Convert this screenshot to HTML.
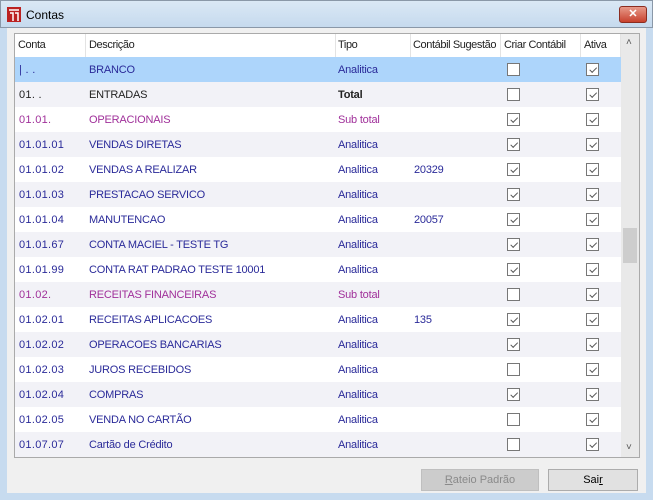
<!DOCTYPE html>
<html><head><meta charset="utf-8"><style>
*{margin:0;padding:0;box-sizing:border-box}
body{width:653px;height:500px;overflow:hidden;background:#c7dbef;font-family:"Liberation Sans",sans-serif;font-size:11px;position:relative}
.title{position:absolute;left:0;top:0;width:653px;height:28px;background:linear-gradient(#dae8f5,#c6daee);border:1px solid #8a98a8}
.title .t{position:absolute;left:25px;top:7px;font-size:12px;color:#000}
.close{position:absolute;left:618px;top:5px;width:28px;height:17px;background:linear-gradient(#e79a8a,#c8422e);border:1px solid #8b2d21;border-radius:3px;color:#fff;font-weight:bold;text-align:center;font-size:11px;line-height:15px}
.client{position:absolute;left:7px;top:28px;width:639px;height:465px;background:#f0f0f0}
.grid{position:absolute;left:14px;top:33px;width:626px;height:425px;background:#fff;border:1px solid #aaa;overflow:hidden}
.hdr{position:absolute;left:0;top:0;height:23px;width:606px;background:#fff;letter-spacing:-0.4px}
.hdr div{position:absolute;top:5px;color:#222;white-space:nowrap}
.vl{position:absolute;top:0;height:23px;width:1px;background:#e3e3e3}
.row{position:absolute;left:0;width:606px;height:25px;letter-spacing:-0.2px}
.row div{position:absolute;top:7px;white-space:nowrap}
.g{background:#f2f2f7}
.sel{background:#add5fb}
.cb{position:absolute;width:13px;height:13px;border:1px solid #777;background:#fff;top:6px!important}
.cb.c::after{content:"";position:absolute;left:2px;top:1px;width:6px;height:3px;border-left:1.3px solid #555;border-bottom:1.3px solid #555;transform:rotate(-45deg) translate(-1px,2px)}
.nv{color:#2a2a99}.pu{color:#a0309a}.bk{color:#222}
.sb{position:absolute;left:606px;top:0;width:18px;height:423px;background:#e9e9e9}
.thumb{position:absolute;left:2px;top:194px;width:14px;height:35px;background:#cdcdcd}
.btn{position:absolute;top:469px;height:22px;border:1px solid #acacac;text-align:center;line-height:20px;font-size:11px}
</style></head><body>
<div class="title"><svg style="position:absolute;left:6px;top:6px" width="14" height="15"><rect x="0" y="0" width="14" height="15" fill="#b22"/><path d="M2 3h10M3 6h3v8M8 6h3v8" stroke="#fff" stroke-width="1.5" fill="none"/></svg><span class="t">Contas</span><div class="close">✕</div></div>
<div class="client"></div>
<div class="grid">
<div class="hdr">
<div style="left:3px">Conta</div><div style="left:74px">Descrição</div><div style="left:323px">Tipo</div><div style="left:398px">Contábil Sugestão</div><div style="left:489px">Criar Contábil</div><div style="left:569px">Ativa</div>
<span class="vl" style="left:70px"></span><span class="vl" style="left:320px"></span><span class="vl" style="left:395px"></span><span class="vl" style="left:485px"></span><span class="vl" style="left:565px"></span><span class="vl" style="left:605px"></span>
</div>
<div id="rows"></div>
<div class="sb"><div style="position:absolute;left:5px;top:3px;color:#555;font-size:10px">˄</div><div class="thumb"></div><div style="position:absolute;left:5px;top:408px;color:#555;font-size:10px">˅</div></div>
</div>
<div class="btn" style="left:421px;width:118px;background:#ccc;color:#8a8a8a;border-color:#bfbfbf"><u>R</u>ateio Padrão</div>
<div class="btn" style="left:548px;width:90px;background:#e1e1e1;color:#000">Sai<u>r</u></div>
<script>
var d=[["| . .","BRANCO","Analitica","",0,1,"nv"],["01. .","ENTRADAS","Total","",0,1,"bk"],["01.01.","OPERACIONAIS","Sub total","",1,1,"pu"],["01.01.01","VENDAS DIRETAS","Analitica","",1,1,"nv"],["01.01.02","VENDAS A REALIZAR","Analitica","20329",1,1,"nv"],["01.01.03","PRESTACAO SERVICO","Analitica","",1,1,"nv"],["01.01.04","MANUTENCAO","Analitica","20057",1,1,"nv"],["01.01.67","CONTA MACIEL - TESTE TG","Analitica","",1,1,"nv"],["01.01.99","CONTA RAT PADRAO TESTE 10001","Analitica","",1,1,"nv"],["01.02.","RECEITAS FINANCEIRAS","Sub total","",0,1,"pu"],["01.02.01","RECEITAS APLICACOES","Analitica","135",1,1,"nv"],["01.02.02","OPERACOES BANCARIAS","Analitica","",1,1,"nv"],["01.02.03","JUROS RECEBIDOS","Analitica","",0,1,"nv"],["01.02.04","COMPRAS","Analitica","",1,1,"nv"],["01.02.05","VENDA NO CARTÃO","Analitica","",0,1,"nv"],["01.07.07","Cartão de Crédito","Analitica","",0,1,"nv"]];
var h="";d.forEach(function(r,i){var c=i==0?"sel":(i%2?"g":"");var cc=i==0?"nv":r[6];var cc1=i==1?"bk":cc;
h+='<div class="row '+c+'" style="top:'+(23+i*25)+'px"><div class="'+cc1+'" style="left:4px;letter-spacing:0.3px">'+r[0]+'</div><div class="'+cc1+'" style="left:74px">'+r[1]+'</div><div class="'+cc1+'" style="left:323px'+(i==1?';font-weight:bold':'')+'">'+r[2]+'</div><div class="'+cc1+'" style="left:399px">'+r[3]+'</div><div class="cb'+(r[4]?' c':'')+'" style="left:492px"></div><div class="cb'+(r[5]?' c':'')+'" style="left:571px"></div></div>';});
document.getElementById("rows").innerHTML=h;
</script>
</body></html>
